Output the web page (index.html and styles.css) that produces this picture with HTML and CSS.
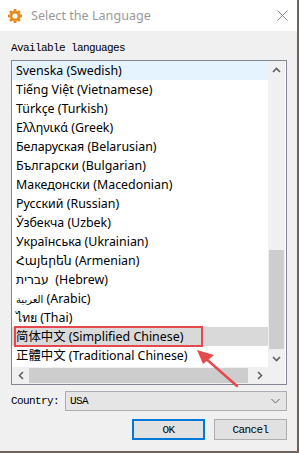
FILE: index.html
```html
<!DOCTYPE html>
<html>
<head>
<meta charset="utf-8">
<title>Select the Language</title>
<link rel="stylesheet" href="styles.css">
</head>
<body>

<div class="window">
  <div class="titlebar">
    <svg class="appicon" width="14" height="14" viewBox="0 0 14 14">
      <g fill="#e8891c">
        <circle cx="7" cy="7" r="5.2"/>
        <rect x="5.6" y="0" width="2.8" height="14" rx="0.6"/>
        <rect x="0" y="5.6" width="14" height="2.8" rx="0.6"/>
        <rect x="5.6" y="0" width="2.8" height="14" rx="0.6" transform="rotate(45 7 7)"/>
        <rect x="5.6" y="0" width="2.8" height="14" rx="0.6" transform="rotate(-45 7 7)"/>
      </g>
      <circle cx="7" cy="7" r="2.6" fill="#fff"/>
    </svg>
    <span class="title">Select the Language</span>
    <svg class="close" width="11" height="11" viewBox="0 0 11 11">
      <path d="M0.5 0.5 L10.5 10.5 M10.5 0.5 L0.5 10.5" stroke="#8a8a8a" stroke-width="1"/>
    </svg>
  </div>

  <div class="content">
    <div class="label">Available languages</div>

    <div class="listbox">
      <div class="rows">
        <div class="row hover">Svenska (Swedish)</div>
        <div class="row">Tiếng Việt (Vietnamese)</div>
        <div class="row">Türkçe (Turkish)</div>
        <div class="row">Ελληνικά (Greek)</div>
        <div class="row">Беларуская (Belarusian)</div>
        <div class="row">Български (Bulgarian)</div>
        <div class="row">Македонски (Macedonian)</div>
        <div class="row">Русский (Russian)</div>
        <div class="row">Ўзбекча (Uzbek)</div>
        <div class="row">Українська (Ukrainian)</div>
        <div class="row">Հայերեն (Armenian)</div>
        <div class="row"><span dir="rtl">עברית</span>&nbsp; (Hebrew)</div>
        <div class="row"><span dir="rtl" class="arabic">العربية</span> (Arabic)</div>
        <div class="row">ไทย (Thai)</div>
        <div class="row selected">简体中文 (Simplified Chinese)<span class="mark"></span></div>
        <div class="row">正體中文 (Traditional Chinese)</div>
      </div>

      <div class="vscroll">
        <div class="arrow">
          <svg width="9" height="6" viewBox="0 0 9 6"><path d="M1 5 L4.5 1.5 L8 5" fill="none" stroke="#606060" stroke-width="1.6"/></svg>
        </div>
        <div class="track"><div class="vthumb"></div></div>
        <div class="arrow">
          <svg width="9" height="6" viewBox="0 0 9 6"><path d="M1 1 L4.5 4.5 L8 1" fill="none" stroke="#606060" stroke-width="1.6"/></svg>
        </div>
      </div>

      <div class="hscroll">
        <div class="arrow">
          <svg width="6" height="9" viewBox="0 0 6 9"><path d="M5 1 L1.5 4.5 L5 8" fill="none" stroke="#606060" stroke-width="1.6"/></svg>
        </div>
        <div class="htrack"><div class="hthumb"></div></div>
        <div class="arrow">
          <svg width="6" height="9" viewBox="0 0 6 9"><path d="M1 1 L4.5 4.5 L1 8" fill="none" stroke="#606060" stroke-width="1.6"/></svg>
        </div>
      </div>

      <div class="corner"></div>
    </div>

    <div class="country">
      <span class="label">Country:</span>
      <div class="combo">
        <span>USA</span>
        <svg width="9" height="6" viewBox="0 0 9 6"><path d="M0.5 1 L4.5 5 L8.5 1" fill="none" stroke="#606060" stroke-width="1"/></svg>
      </div>
    </div>

    <div class="buttons">
      <button class="btn default">OK</button>
      <button class="btn">Cancel</button>
    </div>
  </div>

  <svg class="pointer" width="60" height="50" viewBox="0 0 60 50">
    <path d="M42 40 L9 11" stroke="#e5484d" stroke-width="2.4" stroke-linecap="round"/>
    <path d="M2 4 L19 9 L8 18 Z" fill="#e5484d"/>
  </svg>
</div>

</body>
</html>
```

FILE: styles.css
```css
body {
  margin: 0;
  background-color: #6e645d;
  font-family: "Noto Sans", "DejaVu Sans", "Noto Sans CJK SC", sans-serif;
}

.window {
  position: relative;
  width: 297px;
  height: 451px;
  background-color: #f0f0f0;
  display: flex;
  flex-direction: column;
}

/* Title bar */
.titlebar {
  height: 31px;
  background-color: #fff;
  display: flex;
  align-items: center;
  flex-shrink: 0;
}

.appicon {
  margin-left: 8px;
  margin-top: 1px;
}

.title {
  margin-left: 9px;
  font-size: 12.6px;
  color: #999;
  flex: 1;
}

.close {
  margin-right: 9px;
  margin-top: -1px;
}

/* Dialog content */
.content {
  padding: 10px 10px 0 11px;
  font-family: "Liberation Mono", monospace;
}

.label {
  font-size: 11px;
  letter-spacing: -0.6px;
  line-height: 14px;
  color: #000;
}

.listbox {
  margin-top: 5px;
  height: 323px;
  border: 1px solid #828790;
  background-color: #fff;
  display: grid;
  grid-template-columns: 256px 17px;
  grid-template-rows: 306px 17px;
}

.rows {
  overflow: hidden;
  font-family: "Noto Sans", "DejaVu Sans", "Noto Sans CJK SC", sans-serif;
  font-size: 12.4px;
}

.row {
  position: relative;
  height: 19px;
  line-height: 19px;
  padding-left: 4px;
  white-space: nowrap;
  color: #000;
}

.row.hover {
  background-color: #e5f3ff;
}

.row.selected {
  background-color: #d9d9d9;
}

.arabic {
  font-size: 10px;
}

/* annotation box */
.mark {
  position: absolute;
  left: 2px;
  top: -1px;
  width: 185px;
  height: 17px;
  border: 2px solid #e5484d;
}

/* scrollbars */
.vscroll {
  background-color: #f0f0f0;
  display: flex;
  flex-direction: column;
}

.vscroll .arrow {
  height: 17px;
  display: flex;
  align-items: center;
  justify-content: center;
}

.track {
  flex: 1;
  padding-top: 172px;
}

.vthumb {
  margin: 0 1px;
  height: 99px;
  background-color: #cdcdcd;
}

.hscroll {
  background-color: #f0f0f0;
  display: flex;
}

.hscroll .arrow {
  width: 17px;
  display: flex;
  align-items: center;
  justify-content: center;
}

.htrack {
  flex: 1;
  padding: 1px 0;
}

.hthumb {
  margin-left: 0;
  width: 219px;
  height: 15px;
  background-color: #cdcdcd;
}

.corner {
  background-color: #f0f0f0;
}

/* country row */
.country {
  margin-top: 6px;
  display: flex;
  align-items: center;
}

.country .label {
  width: 54px;
}

.combo {
  flex: 1;
  height: 18px;
  border: 1px solid #adadad;
  background-color: #e5e5e5;
  display: flex;
  align-items: center;
  justify-content: space-between;
  padding: 0 6px 0 4px;
  font-size: 11px;
  letter-spacing: -0.6px;
}

/* buttons */
.buttons {
  margin-top: 8px;
  display: flex;
  justify-content: flex-end;
  gap: 9px;
}

.btn {
  width: 73px;
  height: 21px;
  padding: 0;
  border: 1px solid #adadad;
  background-color: #e1e1e1;
  font-family: "Liberation Mono", monospace;
  font-size: 11px;
  letter-spacing: -0.6px;
  color: #000;
}

.btn.default {
  border: 2px solid #0078d7;
}

.pointer {
  position: absolute;
  left: 195px;
  top: 346px;
}
```
